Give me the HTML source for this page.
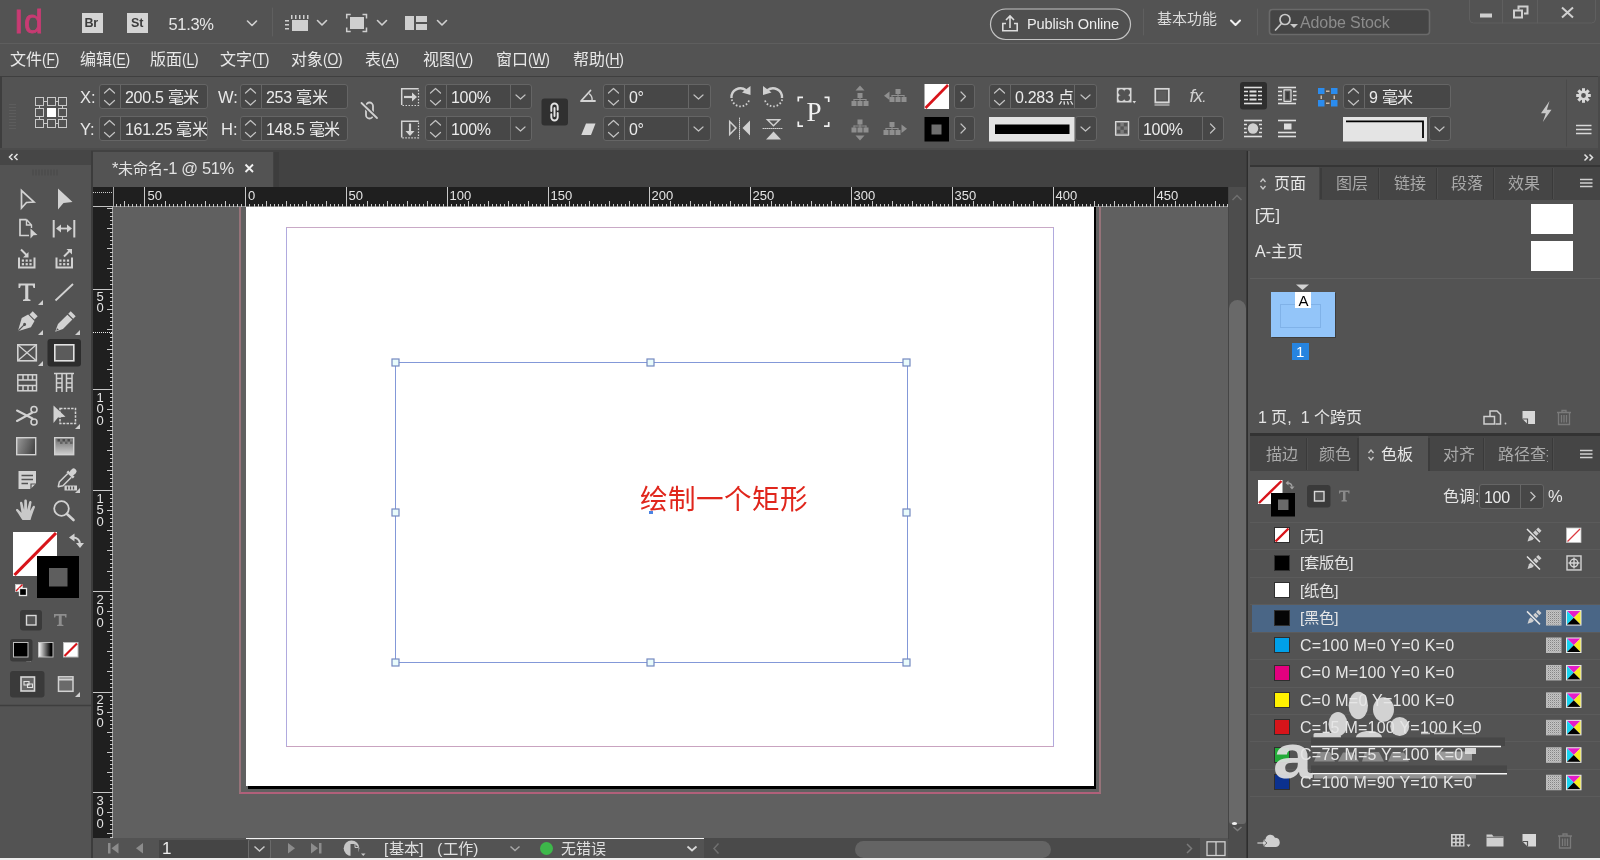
<!DOCTYPE html>
<html lang="zh-CN">
<head>
<meta charset="utf-8">
<title>InDesign</title>
<style>
*{box-sizing:border-box;margin:0;padding:0}
html,body{width:1600px;height:860px;overflow:hidden;background:#535353}
body{filter:grayscale(0);position:relative;font-family:"Liberation Sans",sans-serif;font-size:16px;color:#e6e6e6}
.a{position:absolute}
.t{position:absolute;white-space:nowrap;line-height:1}
svg{position:absolute;overflow:visible}
/* regions */
#topbar{left:0;top:0;width:1600px;height:43px;background:#535353}
#menubar{left:0;top:44px;width:1600px;height:31px;background:#535353}
#ctrl{left:0;top:76px;width:1600px;height:75px;background:#535353;border-top:1px solid #3f3f3f}
#tabrow{left:91px;top:150px;width:1157px;height:37px;background:#424242}
#tab{left:93px;top:152px;width:180px;height:35px;background:#535353}
#tools{left:0;top:150px;width:91px;height:710px;background:#535353}
#hruler{left:93px;top:187px;width:1135px;height:20px;background:#1f1f1f}
#vruler{left:93px;top:187px;width:20px;height:651px;background:#1f1f1f}
#paste{left:113px;top:207px;width:1115px;height:631px;background:#606060}
#vscroll{left:1228px;top:187px;width:19px;height:673px;background:#4d4d4d}
#status{left:93px;top:838px;width:1135px;height:20px;background:#535353;overflow:hidden}
#right{left:1248px;top:151px;width:352px;height:707px;background:#535353;overflow:hidden}
.rl{font-size:13px;color:#e4e4e4}
.rv{font-size:13px;color:#e4e4e4;line-height:11.300px;text-align:center;width:8px}
.mi{top:4.500px;font-size:16px;color:#e8e8e8;line-height:20px}
.ml{display:inline-block;font-size:16.500px;transform:scaleX(0.840);transform-origin:0 50%;letter-spacing:-0.200px}
.mi u{text-underline-offset:2px}

.f{position:absolute;overflow:hidden;height:25px;border:1px solid #656565;border-radius:3px;background:#474747}
.f i{position:absolute;top:0;width:1px;height:23px;background:#676767}
.f b{position:absolute;top:4px;font-weight:normal;font-size:16px;line-height:18px;color:#ebebeb;white-space:nowrap;letter-spacing:-0.3px}
.lb{font-size:16.5px;color:#e8e8e8}

.pt{position:absolute;top:0;height:34px;font-size:16px;line-height:34px;color:#a9a9a9;white-space:nowrap}
.sw{position:absolute;left:26px;width:16px;height:16px;border:1px solid #2e2e2e}
.sn{position:absolute;z-index:2;left:52px;font-size:16px;line-height:20px;color:#e6e6e6;white-space:nowrap}
.rs{position:absolute;left:2px;width:350px;height:1px;background:#5b5b5b}
</style>
</head>
<body>
<div id="topbar" class="a">
<div class="t" style="left:14px;top:2.500px;font-size:34px;color:#c83b73;letter-spacing:0.500px;line-height:36px;-webkit-text-stroke:0.800px #c83b73">Id</div>
<div class="a" style="left:82px;top:13px;width:21px;height:20px;background:#d4d4d4"></div>
<div class="t" style="left:84.5px;top:17px;font-size:12.5px;font-weight:bold;color:#3c3c3c;letter-spacing:-0.3px">Br</div>
<div class="a" style="left:127px;top:13px;width:21px;height:20px;background:#d4d4d4"></div>
<div class="t" style="left:131px;top:17px;font-size:12.5px;font-weight:bold;color:#3c3c3c;letter-spacing:-0.2px">St</div>
<div class="t" style="left:168.500px;top:16px;font-size:16.500px;letter-spacing:-0.350px">51.3%</div>
<svg style="left:0;top:0" width="1600" height="43" fill="none" stroke="#d0d0d0" stroke-width="1.6" stroke-linecap="round" stroke-linejoin="round">
<path d="M247.5 21l4.5 4.5l4.5 -4.5"/><path d="M317.5 20.5l4.5 4.5l4.5 -4.5"/><path d="M377.500 20.5l4.5 4.5l4.5 -4.5"/><path d="M437.5 20.5l4.5 4.5l4.500 -4.500"/>
<path d="M1231 20.5l4.500 4.500l4.500 -4.500" stroke="#f0f0f0" stroke-width="2"/>
<g stroke="none" fill="#cfcfcf">
<rect x="292" y="20" width="16" height="11"/><rect x="285" y="20" width="4" height="1.500"/><rect x="285" y="24" width="4" height="1.500"/><rect x="285" y="28" width="4" height="1.500"/><rect x="291" y="15" width="1.5" height="4"/><rect x="295" y="15" width="1.5" height="4"/><rect x="299" y="15" width="1.5" height="4"/><rect x="303" y="15" width="1.5" height="4"/><rect x="307" y="15" width="1.5" height="4"/>
<rect x="350" y="17" width="14" height="12"/>
<rect x="405" y="16" width="9" height="14"/><rect x="416" y="16" width="11" height="6"/><rect x="416" y="24" width="11" height="6"/>
<rect x="1480" y="13.5" width="12" height="4"/>
</g>
<g stroke="#cfcfcf" stroke-width="1.5" stroke-linecap="butt" stroke-linejoin="miter"><path d="M346.700 18.500v-4h4M362.500 14.500h4v4M366.500 27.500v4h-4M350.700 31.500h-4v-4"/>
<rect x="1514" y="10.5" width="8" height="7" stroke-width="2"/><path d="M1518.500 9.500v-3h9v7h-3.500" stroke-width="2"/>
<path d="M1562 7.500l11 10M1573 7.500l-11 10" stroke-width="2"/>
</g>
<g stroke="#5f5f5f" stroke-width="1"><path d="M272.500 8v28M1143.500 9v26M1257.500 9v26"/><path d="M1469.500 0v19q0 4 4 4h118q4 0 4 -4v-19M1502.500 0v23M1537.500 0v23"/></g>
<rect x="990.500" y="9" width="140" height="30.500" rx="15.250" stroke="#c4c4c4" stroke-width="1.200" fill="#4f4f4f"/>
<g stroke="#dcdcdc" stroke-width="1.600" stroke-linecap="butt" stroke-linejoin="miter"><path d="M1006 23.500h-3.200v7.300h14.400v-7.300h-3.200M1010 28v-11.500M1006 20l4 -4l4 4"/></g>
<rect x="1269.500" y="9.500" width="160" height="25" rx="3" fill="#454545" stroke="#6a6a6a"/>
<g stroke="#c8c8c8" stroke-width="1.700"><circle cx="1285" cy="19.500" r="5"/><path d="M1281.500 23.500l-6 6.500"/></g><path d="M1290 24h8l-4 4z" fill="#c8c8c8" stroke="none"/>
</svg>
<div class="t" style="left:1027px;top:16.500px;font-size:14.600px;color:#ededed;letter-spacing:-0.150px">Publish Online</div>
<div class="t" style="left:1157px;top:11px;font-size:15px;color:#dcdcdc">基本功能</div>
<div class="t" style="left:1300px;top:15px;font-size:16px;color:#8c8c8c;letter-spacing:-0.100px">Adobe Stock</div>
</div>
<div class="a" style="left:0;top:43px;width:1600px;height:1px;background:#5e5e5e"></div>
<div id="menubar" class="a"><div class="t mi" style="left:10px">文件<span class="ml">(<u>F</u>)</span></div><div class="t mi" style="left:80px">编辑<span class="ml">(<u>E</u>)</span></div><div class="t mi" style="left:150px">版面<span class="ml">(<u>L</u>)</span></div><div class="t mi" style="left:220px">文字<span class="ml">(<u>T</u>)</span></div><div class="t mi" style="left:291px">对象<span class="ml">(<u>O</u>)</span></div><div class="t mi" style="left:365px">表<span class="ml">(<u>A</u>)</span></div><div class="t mi" style="left:423px">视图<span class="ml">(<u>V</u>)</span></div><div class="t mi" style="left:496px">窗口<span class="ml">(<u>W</u>)</span></div><div class="t mi" style="left:573px">帮助<span class="ml">(<u>H</u>)</span></div></div>
<div id="ctrl" class="a"></div>
<!-- ===== control panel widgets ===== -->
<div class="a" style="left:0;top:76px;width:2px;height:73px;background:#3e3e3e"></div>
<div class="a" style="left:0;top:148px;width:1600px;height:2px;background:#4c4c4c"></div>
<div class="a" style="left:9px;top:104px;width:7px;height:25px;background:repeating-linear-gradient(180deg,#5d5d5d 0 1px,#535353 1px 3px)"></div>
<div class="a" style="left:1598px;top:76px;width:2px;height:782px;background:#4a4a4a"></div>

<div class="f" style="left:99px;top:84px;width:109px"><i style="left:20px"></i><b style="left:25px">200.5 毫米</b></div>
<div class="f" style="left:99px;top:116px;width:109px"><i style="left:20px"></i><b style="left:25px">161.25 毫米</b></div>
<div class="f" style="left:240px;top:84px;width:108px"><i style="left:20px"></i><b style="left:25px">253 毫米</b></div>
<div class="f" style="left:240px;top:116px;width:108px"><i style="left:20px"></i><b style="left:25px">148.5 毫米</b></div>
<div class="f" style="left:425px;top:84px;width:107px"><i style="left:20px"></i><i style="left:84px"></i><b style="left:25px">100%</b></div>
<div class="f" style="left:425px;top:116px;width:107px"><i style="left:20px"></i><i style="left:84px"></i><b style="left:25px">100%</b></div>
<div class="f" style="left:603px;top:84px;width:108px"><i style="left:20px"></i><i style="left:84px"></i><b style="left:25px">0°</b></div>
<div class="f" style="left:603px;top:116px;width:108px"><i style="left:20px"></i><i style="left:84px"></i><b style="left:25px">0°</b></div>
<div class="f" style="left:954px;top:84px;width:21px"></div>
<div class="f" style="left:954px;top:116px;width:21px"></div>
<div class="f" style="left:989px;top:84px;width:108px"><i style="left:20px"></i><i style="left:84px"></i><b style="left:25px">0.283 点</b></div>
<div class="f" style="left:1075px;top:116px;width:22px"></div>
<div class="f" style="left:1138px;top:116px;width:86px"><i style="left:63px"></i><b style="left:4px">100%</b></div>
<div class="f" style="left:1343px;top:84px;width:108px"><i style="left:20px"></i><b style="left:25px">9 毫米</b></div>
<div class="f" style="left:1429px;top:116px;width:22px"></div>
<div class="t lb" style="left:80px;top:89px">X:</div><div class="t lb" style="left:80px;top:121px">Y:</div>
<div class="t lb" style="left:218px;top:89px">W:</div><div class="t lb" style="left:221px;top:121px">H:</div>
<div class="t" style="left:806.500px;top:99px;font-family:'Liberation Serif',serif;font-size:27px;color:#f0f0f0">P</div>
<div class="t" style="left:1189.500px;top:86.500px;font-size:18.500px;font-style:italic;color:#cfcfcf;letter-spacing:-0.800px">fx<span style="font-size:15px;letter-spacing:0">.</span></div>
<svg id="ctrlsvg" style="left:0;top:0" width="1600" height="151" fill="none" stroke="#d2d2d2" stroke-width="1.500" stroke-linecap="round" stroke-linejoin="round"><g id="chev" stroke="#c2c2c2" stroke-width="1.200"><path d="M104.5 93l5 -4.500l5 4.500M104.5 100.5l5 4.500l5 -4.500"/><path d="M104.5 125l5 -4.500l5 4.500M104.5 132.5l5 4.500l5 -4.500"/><path d="M245.5 93l5 -4.500l5 4.500M245.5 100.5l5 4.500l5 -4.500"/><path d="M245.5 125l5 -4.500l5 4.500M245.5 132.5l5 4.500l5 -4.500"/><path d="M430.5 93l5 -4.500l5 4.500M430.5 100.5l5 4.500l5 -4.500"/><path d="M516.0 95l4.500 4l4.500 -4"/><path d="M430.5 125l5 -4.500l5 4.500M430.5 132.5l5 4.500l5 -4.500"/><path d="M516.0 127l4.500 4l4.500 -4"/><path d="M608.5 93l5 -4.500l5 4.500M608.5 100.5l5 4.500l5 -4.500"/><path d="M694.0 95l4.500 4l4.500 -4"/><path d="M608.5 125l5 -4.500l5 4.500M608.5 132.5l5 4.500l5 -4.500"/><path d="M694.0 127l4.500 4l4.500 -4"/><path d="M961 92l4.500 4.500l-4.500 4.500"/><path d="M961 124l4.500 4.500l-4.500 4.500"/><path d="M994.5 93l5 -4.500l5 4.500M994.5 100.5l5 4.500l5 -4.500"/><path d="M1081.0 95l4.500 4l4.500 -4"/><path d="M1081.0 127l4.500 4l4.500 -4"/><path d="M1210.5 124l4.500 4.500l-4.500 4.500"/><path d="M1348.5 93l5 -4.500l5 4.500M1348.5 100.5l5 4.500l5 -4.500"/><path d="M1435.0 127l4.500 4l4.500 -4"/></g>
<g stroke="#c9c9c9" stroke-width="1" shape-rendering="crispEdges" stroke-linecap="butt"><rect x="35.5" y="97.5" width="8" height="8" fill="none"/><rect x="47.5" y="97.5" width="8" height="8" fill="none"/><rect x="58.5" y="97.5" width="8" height="8" fill="none"/><rect x="35.5" y="108.5" width="8" height="8" fill="none"/><rect x="47.5" y="108.5" width="8" height="8" fill="#fff" stroke="#fff"/><rect x="58.5" y="108.5" width="8" height="8" fill="none"/><rect x="35.5" y="119.5" width="8" height="8" fill="none"/><rect x="47.5" y="119.5" width="8" height="8" fill="none"/><rect x="58.5" y="119.5" width="8" height="8" fill="none"/><path d="M44 101.500h3M56 101.500h2M44 123.500h3M56 123.500h2M39.500 106v2M39.500 117v2M62.500 106v2M62.500 117v2"/></g>
<g stroke="#d0d0d0" stroke-width="1.800"><rect x="366" y="102.500" width="7" height="16" rx="3.500"/><path d="M361.500 103l15.500 15" stroke="#535353" stroke-width="4.500"/><path d="M361.500 103l15.500 15"/></g>
<g stroke="#d4d4d4" stroke-linecap="butt" stroke-linejoin="miter"><path d="M401.700 105v-16.300h17"/><path d="M418.500 90v15.500h-17" stroke-dasharray="1.500 1.500" stroke-width="1.200"/><path d="M404 97h10" stroke-width="2.200"/><path d="M412 92.500l5 4.500l-5 4.500z" fill="#d4d4d4" stroke="none"/><path d="M401.700 137.500v-16.300h17"/><path d="M418.500 122.500v15.300h-17" stroke-dasharray="1.500 1.500" stroke-width="1.200"/><path d="M410 123.500v9" stroke-width="2.200"/><path d="M405.500 131l4.500 5l4.500 -5z" fill="#d4d4d4" stroke="none"/></g>
<rect x="541.500" y="98.500" width="26.500" height="27" rx="3" fill="#303030" stroke="none"/><g stroke="#e4e4e4" stroke-width="1.900"><path d="M551.300 111v-4.300a3.200 3.200 0 0 1 6.400 0v3"/><path d="M557.700 113v4.300a3.200 3.200 0 0 1 -6.400 0v-3"/><path d="M554.500 108v8"/></g>
<g stroke="#d4d4d4" stroke-width="1.800" stroke-linecap="round" stroke-linejoin="round"><path d="M590.500 90.500l-9.500 10.500h14"/><path d="M589.500 94a7 7 0 0 1 2.500 6.500" stroke-width="1.400"/></g><path d="M586 123.500h9.500l-4.500 11.500h-9.700z" fill="#d8d8d8" stroke="none"/>
<g stroke="#d0d0d0" stroke-width="2.400" stroke-linecap="butt"><path d="M731.500 98a9 9 0 0 1 14.500 -7.800"/><path d="M731.800 99.500a9 9 0 0 0 17.600 -0.500" stroke-dasharray="1.600 1.900" stroke-width="1.800"/><path d="M750.500 86v9l-8.500 -2.500z" fill="#d0d0d0" stroke="none"/><path d="M782 98a9 9 0 0 0 -14.500 -7.800"/><path d="M782.200 99.500a9 9 0 0 1 -17.600 -0.500" stroke-dasharray="1.600 1.900" stroke-width="1.800"/><path d="M763 86v9l8.500 -2.500z" fill="#d0d0d0" stroke="none"/></g>
<g stroke="#d0d0d0" stroke-width="1.500" stroke-linejoin="miter"><path d="M729.700 121.500v13l6.300 -6.500z"/><path d="M739.500 118v21.500" stroke-dasharray="1 1" stroke-width="1"/><path d="M750 120.500v15l-7.500 -7.500z" fill="#d0d0d0" stroke="none"/><path d="M767.500 119.700h12l-6 6z"/><path d="M763 128.500h19.500" stroke-dasharray="1 1" stroke-width="1"/><path d="M766 139.500h15l-7.500 -8z" fill="#d0d0d0" stroke="none"/></g>
<g stroke="#f0f0f0" stroke-width="1.700" stroke-linecap="butt" stroke-linejoin="miter"><path d="M798.300 101.500v-4.200h4.700M824.500 97.300h4.200v4.700M828.700 122v4.200h-4.700M803 126.200h-4.700v-4.700"/></g>
<g fill="#8f8f8f" stroke="none"><rect x="857.5" y="93" width="5" height="5"/><rect x="851.5" y="101" width="5" height="5"/><rect x="857.5" y="101" width="5" height="5"/><rect x="863.5" y="101" width="5" height="5"/><path d="M860 98v3M854 99.5h12M854 99.5v1.500M866 99.5v1.500" stroke="#8f8f8f" stroke-width="1" fill="none"/><path d="M855.500 90.500h9l-4.500 -5z"/><rect x="895.5" y="89" width="5" height="5"/><rect x="889.5" y="97" width="5" height="5"/><rect x="895.5" y="97" width="5" height="5"/><rect x="901.5" y="97" width="5" height="5"/><path d="M898 94v3M892 95.5h12M892 95.5v1.500M904 95.5v1.500" stroke="#8f8f8f" stroke-width="1" fill="none"/><path d="M889.500 91.500v8.500l-5.500 -4.200z"/><rect x="857.5" y="119.5" width="5" height="5"/><rect x="851.5" y="127.5" width="5" height="5"/><rect x="857.5" y="127.5" width="5" height="5"/><rect x="863.5" y="127.5" width="5" height="5"/><path d="M860 124.5v3M854 126.0h12M854 126.0v1.500M866 126.0v1.500" stroke="#8f8f8f" stroke-width="1" fill="none"/><path d="M855.500 135.500h9l-4.500 5z"/><rect x="889.5" y="122" width="5" height="5"/><rect x="883.5" y="130" width="5" height="5"/><rect x="889.5" y="130" width="5" height="5"/><rect x="895.5" y="130" width="5" height="5"/><path d="M892 127v3M886 128.5h12M886 128.5v1.500M898 128.5v1.500" stroke="#8f8f8f" stroke-width="1" fill="none"/><path d="M901.500 124.500v8.500l5.500 -4.200z"/></g>
<rect x="924.500" y="84" width="24.500" height="25" fill="#fff" stroke="none"/><path d="M925.500 108l22.500 -23" stroke="#d8141a" stroke-width="2.600" stroke-linecap="butt"/><rect x="924.500" y="117" width="24.500" height="24.500" fill="#000" stroke="none"/><rect x="931.500" y="124.500" width="10" height="10" fill="#6e6e6e" stroke="none"/>
<rect x="989" y="117" width="85.500" height="24.500" fill="#e3e3e3" stroke="none"/><rect x="995" y="124.500" width="74.500" height="9.500" fill="#000" stroke="none"/>
<g stroke="#d6d6d6" stroke-width="1.700" stroke-linejoin="miter"><rect x="1116.800" y="87.800" width="14.700" height="14.700" fill="#d6d6d6" stroke="none"/><g fill="#535353" stroke="none"><circle cx="1121.300" cy="92.300" r="3"/><circle cx="1127" cy="92.300" r="3"/><circle cx="1121.300" cy="98" r="3"/><circle cx="1127" cy="98" r="3"/><rect x="1121" y="92" width="6.500" height="6.500"/></g><path d="M1132.500 101h3.600l-1.800 2.400z" fill="#d6d6d6" stroke="none"/><rect x="1155.300" y="88.800" width="13.500" height="13.500"/><rect x="1157.500" y="91" width="9" height="9" fill="#5c5c5c" stroke="none"/><rect x="1154.500" y="103.300" width="15" height="2.700" fill="#9a9a9a" stroke="none"/></g>
<g stroke="none"><rect x="1115" y="121" width="14" height="14.500" fill="#7c7c7c"/><rect x="1117" y="123" width="3.400" height="3.400" fill="#555"/><rect x="1123.800" y="123" width="3.400" height="3.400" fill="#555"/><rect x="1120.400" y="126.400" width="3.400" height="3.400" fill="#555"/><rect x="1117" y="129.800" width="3.400" height="3.400" fill="#555"/><rect x="1123.800" y="129.800" width="3.400" height="3.400" fill="#555"/><rect x="1115.600" y="121.600" width="13" height="13.500" fill="none" stroke="#d8d8d8" stroke-width="1.300"/></g>
<rect x="1240" y="82" width="27" height="27.500" rx="3" fill="#2e2e2e" stroke="none"/><g stroke="#e0e0e0" stroke-width="1.600" stroke-linecap="butt"><path d="M1244 87.5h18"/><path d="M1244 103.5h18"/><path d="M1244 91.500h4M1258 91.500h4M1244 95.500h4M1258 95.500h4M1244 99.500h4M1258 99.500h4"/><path d="M1249.500 91.500h7M1249.500 95.500h7M1249.500 99.500h7" stroke-width="2.200"/><path d="M1278 87.5h18"/><path d="M1278 103.5h18"/><path d="M1278 91.500h4M1293 91.500h3.500M1278 95.500h4M1293 95.500h3.500M1278 99.500h4M1293 99.500h3.500"/><rect x="1284" y="89.800" width="7" height="11.500" fill="#535353" stroke-width="1.200"/><rect x="1286.300" y="92" width="2.500" height="7" fill="#3a3a3a" stroke="none"/><path d="M1244 120.5h18"/><path d="M1244 136.5h18"/><path d="M1244 124.500h3M1259 124.500h3M1244 128.500h2.500M1260 128.500h2M1244 132.500h3M1259 132.500h3"/><circle cx="1253" cy="128.500" r="5.200" fill="#cfcfcf" stroke="none"/><path d="M1278 120.5h18"/><path d="M1278 132.5h18"/><path d="M1278 136.5h18"/><rect x="1284" y="123.500" width="7.500" height="6" fill="#dcdcdc" stroke="none"/></g>
<g stroke="none" fill="#2b8cee"><rect x="1318" y="88" width="6.500" height="6"/><rect x="1331" y="88" width="6.500" height="6"/><rect x="1318" y="100" width="6.500" height="6.500"/><rect x="1331" y="100" width="6.500" height="6.500"/></g><g stroke="none" fill="#c9b8a8"><rect x="1326" y="90.500" width="3.500" height="1.500"/><rect x="1326" y="102.500" width="3.500" height="1.500"/><rect x="1320.500" y="95.500" width="1.500" height="3.500"/><rect x="1333.500" y="95.500" width="1.500" height="3.500"/></g>
<rect x="1343" y="117" width="84" height="24.500" fill="#e4e4e4" stroke="none"/><path d="M1346 121.300h77v16.700" stroke="#000" stroke-width="1.800" stroke-linecap="butt" stroke-linejoin="miter"/>
<path d="M1549.500 101l-8.500 12.300h4.800l-3 8.700l8.700 -12.300h-4.600z" fill="#c8c8c8" stroke="none"/>
<g transform="translate(1583.500 95.500)" stroke="none" fill="#d8d8d8"><rect x="-1.500" y="-7.300" width="3" height="3.200" transform="rotate(0)"/><rect x="-1.500" y="-7.300" width="3" height="3.200" transform="rotate(45)"/><rect x="-1.500" y="-7.300" width="3" height="3.200" transform="rotate(90)"/><rect x="-1.500" y="-7.300" width="3" height="3.200" transform="rotate(135)"/><rect x="-1.500" y="-7.300" width="3" height="3.200" transform="rotate(180)"/><rect x="-1.500" y="-7.300" width="3" height="3.200" transform="rotate(225)"/><rect x="-1.500" y="-7.300" width="3" height="3.200" transform="rotate(270)"/><rect x="-1.500" y="-7.300" width="3" height="3.200" transform="rotate(315)"/></g><circle cx="1583.500" cy="95.500" r="3.700" stroke="#d8d8d8" stroke-width="2.600"/>
<g stroke="#d8d8d8" stroke-width="1.500" stroke-linecap="butt"><path d="M1576 125.500h15.500M1576 129.500h15.500M1576 133.500h15.500"/></g>
<path d="M1566.500 80v66" stroke="#4a4a4a" stroke-width="1"/>
</svg>

<div id="tabrow" class="a"></div>
<div id="tab" class="a"><div class="t" style="left:19px;top:7px;font-size:16.500px;color:#e2e2e2;letter-spacing:-0.350px;line-height:18px">*<span style="font-size:15px;letter-spacing:0">未命名</span>-1 @ 51%</div>
<svg style="left:152px;top:12px" width="9" height="9" stroke="#f0f0f0" stroke-width="1.900" stroke-linecap="butt"><path d="M0.500 0.500l7.500 7.500M8 0.500l-7.500 7.500"/></svg></div>
<div class="a" style="left:274px;top:152px;width:5px;height:35px;background:#3d3d3d"></div>
<div id="tools" class="a"><svg style="left:0;top:0" width="91" height="710" fill="none" stroke="#d2d2d2" stroke-width="1.500"><defs><linearGradient id="gsw" x1="0" y1="0" x2="1" y2="0.300"><stop offset="0" stop-color="#9a9a9a"/><stop offset="1" stop-color="#4a4a4a"/></linearGradient><linearGradient id="gfe" x1="0" y1="0" x2="0" y2="1"><stop offset="0" stop-color="#6a6a6a"/><stop offset="1" stop-color="#cfcfcf"/></linearGradient><linearGradient id="gbw" x1="0" y1="0" x2="1" y2="0"><stop offset="0" stop-color="#fff"/><stop offset="0.850" stop-color="#000"/></linearGradient></defs><rect x="0" y="0" width="91" height="15" fill="#464646" stroke="none"/><path d="M12.500 10l-3 -3l3 -3M17.500 10l-3 -3l3 -3" stroke="#e4e4e4" stroke-width="1.500" stroke-linejoin="miter" stroke-linecap="butt"/><path d="M33 19.500v6M36 19.500v6M39 19.500v6M42 19.500v6M45 19.500v6M48 19.500v6M51 19.500v6M54 19.500v6M57 19.500v6" stroke="#484848" stroke-width="1"/><g transform="translate(0 -150)"><path d="M21.500 190.500v17.500l5 -5.500l7.500 -0.500z" stroke-width="1.700" stroke-linejoin="miter"/>
<path d="M58 188.500v21l5.500 -6.500l9 -1z" fill="#d2d2d2" stroke="none"/>
<path d="M26.500 219.700h-6.500v15.800h9" stroke-width="1.700" stroke-linejoin="miter" stroke-linecap="butt"/><path d="M26.500 219.500l5 5.500v3M26.500 219.500v5.500h5" stroke-width="1.400" stroke-linejoin="miter"/><path d="M30.500 228.500v10l3 -3.200l4 -0.300z" fill="#d2d2d2" stroke="none"/>
<path d="M53.700 220v17.500M74.300 220v17.500" stroke-width="2" stroke-linecap="butt"/><path d="M59 228.500h10" stroke-width="1.800"/><path d="M61 224.500l-5 4l5 4zM67 224.500l5 4l-5 4z" fill="#d2d2d2" stroke="none"/>
<path d="M19 257.5v10h15.500v-10" stroke-width="2" stroke-linejoin="miter" stroke-linecap="butt"/><rect x="21.8" y="259.5" width="2.200" height="2.200" fill="#d2d2d2" stroke="none"/><rect x="21.8" y="263.1" width="2.200" height="2.200" fill="#d2d2d2" stroke="none"/><rect x="25.6" y="259.5" width="2.200" height="2.200" fill="#d2d2d2" stroke="none"/><rect x="25.6" y="263.1" width="2.200" height="2.200" fill="#d2d2d2" stroke="none"/><rect x="29.4" y="259.5" width="2.200" height="2.200" fill="#d2d2d2" stroke="none"/><rect x="29.4" y="263.1" width="2.200" height="2.200" fill="#d2d2d2" stroke="none"/><path d="M21 249.500l6 6" stroke-width="2" stroke-linecap="butt"/><path d="M28.500 252v5.500h-5.500z" fill="#d2d2d2" stroke="none"/>
<path d="M56.5 257.5v10h15.500v-10" stroke-width="2" stroke-linejoin="miter" stroke-linecap="butt"/><rect x="59.3" y="259.5" width="2.200" height="2.200" fill="#d2d2d2" stroke="none"/><rect x="59.3" y="263.1" width="2.200" height="2.200" fill="#d2d2d2" stroke="none"/><rect x="63.099999999999994" y="259.5" width="2.200" height="2.200" fill="#d2d2d2" stroke="none"/><rect x="63.099999999999994" y="263.1" width="2.200" height="2.200" fill="#d2d2d2" stroke="none"/><rect x="66.89999999999999" y="259.5" width="2.200" height="2.200" fill="#d2d2d2" stroke="none"/><rect x="66.89999999999999" y="263.1" width="2.200" height="2.200" fill="#d2d2d2" stroke="none"/><path d="M64 256.500l6 -6" stroke-width="2" stroke-linecap="butt"/><path d="M66.500 249h5.500v5.500z" fill="#d2d2d2" stroke="none"/>
<path d="M18.500 283.500h16.500v4.500h-1.500l-0.800 -2.500h-4.400v13.500l2.200 0.700v1.300h-7.500v-1.300l2.200 -0.700v-13.500h-4.400l-0.800 2.500h-1.500z" fill="#d2d2d2" stroke="none"/>
<path d="M55.500 300.500l17.500 -16.500" stroke-width="1.800" stroke-linecap="butt"/>
<path d="M43 305v-5l-5 5z" fill="#cfcfcf" stroke="none"/><path d="M43 335v-5l-5 5z" fill="#cfcfcf" stroke="none"/><path d="M80 335v-5l-5 5z" fill="#cfcfcf" stroke="none"/><path d="M43 366v-5l-5 5z" fill="#cfcfcf" stroke="none"/><path d="M80 366v-5l-5 5z" fill="#e0e0e0" stroke="none"/><path d="M80 429v-5l-5 5z" fill="#cfcfcf" stroke="none"/><path d="M80 493v-5l-5 5z" fill="#cfcfcf" stroke="none"/><path d="M31 661.5v-5l-5 5z" fill="#cfcfcf" stroke="none"/><path d="M80 697v-5l-5 5z" fill="#cfcfcf" stroke="none"/>
<g transform="translate(26 323) rotate(45)" stroke="none" fill="#d2d2d2"><path d="M-3.500 -13h7v4.500h-7z"/><path d="M-4.500 -7.500h9l2 7l-6.500 12l-6.500 -12z"/><path d="M0 11v-8" stroke="#535353" stroke-width="1.200"/><circle cx="0" cy="2" r="1.500" fill="#535353"/></g>
<g transform="translate(64 323) rotate(45)" stroke="none" fill="#d2d2d2"><path d="M-3.500 -13h7v3.500h-7z"/><path d="M-3.500 -8.300h7v13.300l-3.500 7.500l-3.500 -7.500z"/><path d="M-1.200 8.500l1.200 2.500l1.200 -2.500z" fill="#535353"/></g>
<rect x="17.800" y="344.800" width="18.500" height="16" stroke-width="1.600"/><path d="M18 345l18 15.500M36 345l-18 15.500" stroke-width="1.300"/>
<rect x="47.500" y="339" width="33.500" height="27.500" rx="3" fill="#2d2d2d" stroke="none"/><rect x="54.800" y="344.800" width="19" height="16" fill="#5b5b5b" stroke-width="1.600" stroke="#e2e2e2"/>
<g stroke-width="1.500" stroke-linecap="butt"><rect x="17.800" y="374.800" width="18.700" height="16"/><path d="M18 380h18.500M18 385.500h18.500M23 375v5M28 375v5M32.500 375v5M23 385.500v5.500M28 385.500v5.500M32.500 385.500v5.500"/></g>
<g stroke-width="1.500" stroke-linecap="butt"><path d="M54 373.500h20M56.500 373.500v18.500M62 373.500v18.500M66.500 373.500v18.500M72 373.500v18.500M56.500 378.500h5.500M56.500 383h5.500M56.500 387.500h5.500M66.500 378.500h5.500M66.500 383h5.500M66.500 387.500h5.500"/></g>
<g stroke-width="2"><path d="M17 410.500l15.500 8M17 421l15.500 -8.500" stroke-linecap="round"/><circle cx="34" cy="409.500" r="3" stroke-width="1.600"/><circle cx="34" cy="422" r="3" stroke-width="1.600"/></g>
<rect x="60" y="408.500" width="15.500" height="15" stroke-width="1.500" stroke-dasharray="2.500 1.200"/><path d="M53.500 405.500v17.500l4.500 -5.500l7.500 -0.700z" fill="#d2d2d2" stroke="none"/>
<rect x="16.700" y="437.700" width="19" height="17" fill="url(#gsw)" stroke-width="1.400"/><rect x="54.700" y="437.700" width="19" height="17" fill="url(#gfe)" stroke-width="1.400"/><g fill="#4a4a4a" stroke="none"><rect x="57.500" y="439" width="2.500" height="2.500"/><rect x="62.500" y="439" width="2.500" height="2.500"/><rect x="67.500" y="439" width="2.500" height="2.500"/><rect x="60" y="441.500" width="2.500" height="2.500" opacity=".6"/><rect x="65" y="441.500" width="2.500" height="2.500" opacity=".6"/><rect x="70" y="441.500" width="2.500" height="2.500" opacity=".6"/></g>
<path d="M18.500 471h17.500v12.500l-5.500 5.500h-12z" fill="#d2d2d2" stroke="none"/><path d="M21.500 475.500h11.500M21.500 479.500h11.500M21.500 483.500h6.500" stroke="#535353" stroke-width="1.500" stroke-linecap="butt"/><path d="M31 489v-5h5" stroke="#535353" stroke-width="1.200"/>
<g transform="translate(65 480) rotate(45)"><rect x="-2.800" y="-15" width="5.600" height="7" rx="2.500" fill="#d2d2d2" stroke="none"/><rect x="-4.500" y="-9" width="9" height="2.500" fill="#d2d2d2" stroke="none"/><path d="M-2.600 -6.500v12l2.600 4l2.600 -4v-12" stroke-width="1.500" stroke-linejoin="round"/></g><rect x="64.500" y="485.500" width="12.500" height="5" fill="#d2d2d2" stroke="none"/><path d="M67.500 486.500v3M70.500 486.500v3M73.500 486.500v3" stroke="#535353" stroke-width="1.300"/>
<path d="M22.500 520c-1.500 -2 -4 -6.500 -6.300 -9.300c-0.800 -1.200 0.700 -2.500 2 -1.300l3.300 3.300l-1.500 -9.500c-0.300 -1.700 2 -2.200 2.400 -0.500l1.700 7l0.200 -9c0 -1.700 2.500 -1.700 2.600 0l0.300 9l1.900 -7.800c0.400 -1.600 2.700 -1.100 2.400 0.600l-1.500 8.500l2.700 -4.500c0.900 -1.400 2.800 -0.300 2.100 1.200c-1.500 3.500 -3 8 -4.300 12.300z" fill="#c9c9c9" stroke="none"/>
<circle cx="61.500" cy="508.500" r="7.300" stroke-width="1.800"/><path d="M67 514l6.500 6" stroke-width="2.600" stroke-linecap="round"/>
<rect x="13" y="532" width="44" height="44" fill="#fff" stroke="none"/><path d="M14.500 575l41.500 -42" stroke="#d8141a" stroke-width="3.200" stroke-linecap="butt"/><rect x="37" y="556" width="42" height="42" fill="#000" stroke="none"/><rect x="49" y="568" width="18.500" height="18.500" fill="#5e5e5e" stroke="none"/>
<path d="M73.500 537.500q6 0.500 6.500 6.500" stroke-width="2"/><path d="M74.500 533.500v8l-5.500 -4zM76 543h8l-4 5z" fill="#d2d2d2" stroke="none"/>
<rect x="15.500" y="584.500" width="7" height="7" fill="#fff" stroke="#ccc" stroke-width="0.800"/><path d="M16 591l6.500 -6.500" stroke="#d8141a" stroke-width="1.500"/><rect x="19.500" y="588.500" width="7" height="7" fill="#000" stroke="#e8e8e8" stroke-width="1.300"/>
<rect x="20" y="610" width="22" height="20.500" rx="3" fill="#3a3a3a" stroke="none"/><rect x="26.500" y="615.500" width="9.500" height="9.500" fill="#555" stroke="#d8d8d8" stroke-width="1.400"/>
<path d="M54 614h12.500v3.500h-1.200l-0.600 -1.800h-3v8.800l1.700 0.500v1h-6.300v-1l1.700 -0.500v-8.800h-3l-0.600 1.800h-1.200z" fill="#8e8e8e" stroke="none"/>
<rect x="10" y="639" width="22.500" height="22.500" rx="3" fill="#3a3a3a" stroke="none"/><rect x="13.500" y="642.500" width="14.500" height="14.500" fill="#000" stroke="#bdbdbd" stroke-width="1"/><rect x="38.500" y="642.500" width="14.500" height="14.500" fill="url(#gbw)" stroke="#bdbdbd" stroke-width="1"/><rect x="63.500" y="642.500" width="14.500" height="14.500" fill="#fff" stroke="#bdbdbd" stroke-width="1"/><path d="M64.500 656l12.500 -12.500" stroke="#d8141a" stroke-width="2.200"/>
<rect x="10" y="671" width="34.500" height="26.500" rx="3" fill="#3a3a3a" stroke="none"/><rect x="21" y="677" width="13.500" height="14" fill="#666" stroke="#d8d8d8" stroke-width="1.600"/><path d="M24 681.500h5v3.500h-5zM27.500 684h5v3.500h-5z" stroke="#e0e0e0" stroke-width="1.100"/>
<rect x="58.500" y="676.800" width="14.500" height="14.500" fill="#6a6a6a" stroke="#d2d2d2" stroke-width="1.500"/><path d="M58.500 679.500h14.500" stroke="#d2d2d2" stroke-width="2"/>
<path d="M0 705.500h91" stroke="#3e3e3e" stroke-width="1.500"/></g></svg></div>
<div class="a" style="left:91px;top:151px;width:2px;height:709px;background:#3c3c3c"></div>
<div id="paste" class="a"></div>

<div class="a" style="left:113px;top:207px;width:1115px;height:631px;overflow:hidden"><div class="a" style="left:-113px;top:-207px;width:1600px;height:860px">
<!-- ===== canvas ===== -->
<div id="page" class="a" style="left:246px;top:188px;width:848px;height:598px;background:#fff;box-shadow:2px 3px 0 0 #000"></div>
<div class="a" style="left:239px;top:180px;width:862px;height:614px;border:2px solid #967379;border-bottom-color:#b1607a"></div>
<div class="a" style="left:286px;top:227px;width:768px;height:520px;border:1px solid #b0aade;border-top-color:#c9a9c6;border-bottom-color:#c9a3c0"></div>
<div class="a" style="left:395px;top:362px;width:513px;height:301px;border:1px solid #8398d8"></div>
<div class="t" style="left:640px;top:484px;font-size:27.6px;color:#e0261c;letter-spacing:0;line-height:32px">绘制一个矩形</div>
<div class="a" style="left:649px;top:511px;width:4px;height:3px;background:#4b84e4"></div>
<svg style="left:0;top:0" width="1600" height="860"><g fill="#e9fbfb" stroke="#7489c0" stroke-width="1.200">
<rect x="392" y="359" width="7" height="7"/><rect x="647" y="359" width="7" height="7"/><rect x="903" y="359" width="7" height="7"/>
<rect x="392" y="509" width="7" height="7"/><rect x="903" y="509" width="7" height="7"/>
<rect x="392" y="659" width="7" height="7"/><rect x="647" y="659" width="7" height="7"/><rect x="903" y="659" width="7" height="7"/>
</g></svg>
</div></div>
<div id="hruler" class="a"></div>
<div id="vruler" class="a"></div>

<!-- ===== rulers ===== -->
<svg style="left:93px;top:186px" width="1135" height="21"><g stroke="#c8c8c8" stroke-width="1" fill="none" shape-rendering="crispEdges">
<path d="M20 20.500H1135" stroke="#858585"/><path d="M0 20.500H20" stroke="#c0c0c0"/><path d="M20.500 1V21" stroke="#a8a8a8"/><path d="M0 6.500H19" stroke="#cfcfcf" stroke-dasharray="1 1"/>
<path d="M51.5 21v-20M152.5 21v-20M253.5 21v-20M354.5 21v-20M455.5 21v-20M556.5 21v-20M657.5 21v-20M758.5 21v-20M859.5 21v-20M960.5 21v-20M1061.5 21v-20"/><path d="M31.5 21v-6M72 21v-6M92 21v-6M112.5 21v-6M132.5 21v-6M173 21v-6M193 21v-6M213.5 21v-6M233.5 21v-6M274 21v-6M294 21v-6M314.5 21v-6M334.5 21v-6M375 21v-6M395 21v-6M415.5 21v-6M435.5 21v-6M476 21v-6M496 21v-6M516.5 21v-6M536.5 21v-6M577 21v-6M597 21v-6M617.5 21v-6M637.5 21v-6M678 21v-6M698 21v-6M718.5 21v-6M738.5 21v-6M779 21v-6M799 21v-6M819.5 21v-6M839.5 21v-6M880 21v-6M900 21v-6M920.5 21v-6M940.5 21v-6M981 21v-6M1001 21v-6M1021.5 21v-6M1041.5 21v-6M1082 21v-6M1102 21v-6M1122.5 21v-6"/><path d="M23.5 21v-3M27.5 21v-3M35.5 21v-3M39.5 21v-3M43.5 21v-3M47.5 21v-3M55.5 21v-3M60 21v-3M64 21v-3M68 21v-3M76 21v-3M80 21v-3M84 21v-3M88 21v-3M96 21v-3M100 21v-3M104 21v-3M108.5 21v-3M116.5 21v-3M120.5 21v-3M124.5 21v-3M128.5 21v-3M136.5 21v-3M140.5 21v-3M144.5 21v-3M148.5 21v-3M156.5 21v-3M161 21v-3M165 21v-3M169 21v-3M177 21v-3M181 21v-3M185 21v-3M189 21v-3M197 21v-3M201 21v-3M205 21v-3M209.5 21v-3M217.5 21v-3M221.5 21v-3M225.5 21v-3M229.5 21v-3M237.5 21v-3M241.5 21v-3M245.5 21v-3M249.5 21v-3M257.5 21v-3M262 21v-3M266 21v-3M270 21v-3M278 21v-3M282 21v-3M286 21v-3M290 21v-3M298 21v-3M302 21v-3M306 21v-3M310.5 21v-3M318.5 21v-3M322.5 21v-3M326.5 21v-3M330.5 21v-3M338.5 21v-3M342.5 21v-3M346.5 21v-3M350.5 21v-3M358.5 21v-3M363 21v-3M367 21v-3M371 21v-3M379 21v-3M383 21v-3M387 21v-3M391 21v-3M399 21v-3M403 21v-3M407 21v-3M411.5 21v-3M419.5 21v-3M423.5 21v-3M427.5 21v-3M431.5 21v-3M439.5 21v-3M443.5 21v-3M447.5 21v-3M451.5 21v-3M459.5 21v-3M464 21v-3M468 21v-3M472 21v-3M480 21v-3M484 21v-3M488 21v-3M492 21v-3M500 21v-3M504 21v-3M508 21v-3M512.5 21v-3M520.5 21v-3M524.5 21v-3M528.5 21v-3M532.5 21v-3M540.5 21v-3M544.5 21v-3M548.5 21v-3M552.5 21v-3M560.5 21v-3M565 21v-3M569 21v-3M573 21v-3M581 21v-3M585 21v-3M589 21v-3M593 21v-3M601 21v-3M605 21v-3M609 21v-3M613.5 21v-3M621.5 21v-3M625.5 21v-3M629.5 21v-3M633.5 21v-3M641.5 21v-3M645.5 21v-3M649.5 21v-3M653.5 21v-3M661.5 21v-3M666 21v-3M670 21v-3M674 21v-3M682 21v-3M686 21v-3M690 21v-3M694 21v-3M702 21v-3M706 21v-3M710 21v-3M714.5 21v-3M722.5 21v-3M726.5 21v-3M730.5 21v-3M734.5 21v-3M742.5 21v-3M746.5 21v-3M750.5 21v-3M754.5 21v-3M762.5 21v-3M767 21v-3M771 21v-3M775 21v-3M783 21v-3M787 21v-3M791 21v-3M795 21v-3M803 21v-3M807 21v-3M811 21v-3M815.5 21v-3M823.5 21v-3M827.5 21v-3M831.5 21v-3M835.5 21v-3M843.5 21v-3M847.5 21v-3M851.5 21v-3M855.5 21v-3M863.5 21v-3M868 21v-3M872 21v-3M876 21v-3M884 21v-3M888 21v-3M892 21v-3M896 21v-3M904 21v-3M908 21v-3M912 21v-3M916.5 21v-3M924.5 21v-3M928.5 21v-3M932.5 21v-3M936.5 21v-3M944.5 21v-3M948.5 21v-3M952.5 21v-3M956.5 21v-3M964.5 21v-3M969 21v-3M973 21v-3M977 21v-3M985 21v-3M989 21v-3M993 21v-3M997 21v-3M1005 21v-3M1009 21v-3M1013 21v-3M1017.5 21v-3M1025.5 21v-3M1029.5 21v-3M1033.5 21v-3M1037.5 21v-3M1045.5 21v-3M1049.5 21v-3M1053.5 21v-3M1057.5 21v-3M1065.5 21v-3M1070 21v-3M1074 21v-3M1078 21v-3M1086 21v-3M1090 21v-3M1094 21v-3M1098 21v-3M1106 21v-3M1110 21v-3M1114 21v-3M1118.5 21v-3M1126.5 21v-3M1130.5 21v-3M1134.5 21v-3"/></g></svg>
<svg style="left:93px;top:186px" width="20" height="652"><g stroke="#c8c8c8" stroke-width="1" fill="none" shape-rendering="crispEdges">
<path d="M19.500 21V652" stroke="#a0a0a0"/>
<path d="M20 103h-20M20 203.5h-20M20 304h-20M20 405h-20M20 506h-20M20 606.5h-20"/><path d="M20 22h-6M20 42.5h-6M20 62.5h-6M20 82.5h-6M20 123h-6M20 143h-6M20 163h-6M20 183.5h-6M20 223.5h-6M20 244h-6M20 264h-6M20 284h-6M20 324.5h-6M20 344.5h-6M20 364.5h-6M20 385h-6M20 425h-6M20 445.5h-6M20 465.5h-6M20 485.5h-6M20 526h-6M20 546h-6M20 566h-6M20 586.5h-6M20 626.5h-6M20 647h-6"/><path d="M20 26h-3M20 30h-3M20 34h-3M20 38.5h-3M20 46.5h-3M20 50.5h-3M20 54.5h-3M20 58.5h-3M20 66.5h-3M20 70.5h-3M20 74.5h-3M20 78.5h-3M20 86.5h-3M20 90.5h-3M20 94.5h-3M20 98.5h-3M20 107h-3M20 111h-3M20 115h-3M20 119h-3M20 127h-3M20 131h-3M20 135h-3M20 139h-3M20 147h-3M20 151h-3M20 155h-3M20 159h-3M20 167h-3M20 171.5h-3M20 175.5h-3M20 179.5h-3M20 187.5h-3M20 191.5h-3M20 195.5h-3M20 199.5h-3M20 207.5h-3M20 211.5h-3M20 215.5h-3M20 219.5h-3M20 227.5h-3M20 231.5h-3M20 235.5h-3M20 240h-3M20 248h-3M20 252h-3M20 256h-3M20 260h-3M20 268h-3M20 272h-3M20 276h-3M20 280h-3M20 288h-3M20 292h-3M20 296h-3M20 300h-3M20 308.5h-3M20 312.5h-3M20 316.5h-3M20 320.5h-3M20 328.5h-3M20 332.5h-3M20 336.5h-3M20 340.5h-3M20 348.5h-3M20 352.5h-3M20 356.5h-3M20 360.5h-3M20 368.5h-3M20 373h-3M20 377h-3M20 381h-3M20 389h-3M20 393h-3M20 397h-3M20 401h-3M20 409h-3M20 413h-3M20 417h-3M20 421h-3M20 429h-3M20 433h-3M20 437h-3M20 441.5h-3M20 449.5h-3M20 453.5h-3M20 457.5h-3M20 461.5h-3M20 469.5h-3M20 473.5h-3M20 477.5h-3M20 481.5h-3M20 489.5h-3M20 493.5h-3M20 497.5h-3M20 501.5h-3M20 510h-3M20 514h-3M20 518h-3M20 522h-3M20 530h-3M20 534h-3M20 538h-3M20 542h-3M20 550h-3M20 554h-3M20 558h-3M20 562h-3M20 570h-3M20 574.5h-3M20 578.5h-3M20 582.5h-3M20 590.5h-3M20 594.5h-3M20 598.5h-3M20 602.5h-3M20 610.5h-3M20 614.5h-3M20 618.5h-3M20 622.5h-3M20 630.5h-3M20 634.5h-3M20 638.5h-3M20 643h-3M20 651h-3"/>
<path d="M0 146.5H20" stroke="#eee" stroke-dasharray="1 1"/></g></svg>
<div class="t rl" style="left:147.5px;top:189px">50</div><div class="t rl" style="left:248px;top:189px">0</div><div class="t rl" style="left:348.5px;top:189px">50</div><div class="t rl" style="left:449.5px;top:189px">100</div><div class="t rl" style="left:550.5px;top:189px">150</div><div class="t rl" style="left:651.5px;top:189px">200</div><div class="t rl" style="left:752.5px;top:189px">250</div><div class="t rl" style="left:853.5px;top:189px">300</div><div class="t rl" style="left:954.5px;top:189px">350</div><div class="t rl" style="left:1055.5px;top:189px">400</div><div class="t rl" style="left:1156.5px;top:189px">450</div><div class="t rv" style="left:96px;top:291px">5<br>0</div><div class="t rv" style="left:96px;top:392px">1<br>0<br>0</div><div class="t rv" style="left:96px;top:493px">1<br>5<br>0</div><div class="t rv" style="left:96px;top:594px">2<br>0<br>0</div><div class="t rv" style="left:96px;top:694px">2<br>5<br>0</div><div class="t rv" style="left:96px;top:795px">3<br>0<br>0</div>
<div id="vscroll" class="a"><div class="a" style="left:1px;top:113px;width:17px;height:524px;background:#696969;border-radius:8.500px 8.500px 3px 3px"></div>
<div class="a" style="left:0;top:0;width:1px;height:652px;background:#454545"></div>
<svg style="left:0;top:0" width="20" height="652" fill="none" stroke="#6f6f6f" stroke-width="1.500"><path d="M4.500 13l4.500 -4.500l4.500 4.500"/><path d="M5.500 640l4 3.500l4 -3.500" stroke="#7c7c7c"/><ellipse cx="6.500" cy="636.500" rx="2.600" ry="1.600" fill="#f2f2f2" stroke="none"/></svg></div>
<div class="a" style="left:1246px;top:151px;width:4px;height:709px;background:#3a3a3a"></div><div class="a" style="left:1247px;top:151px;width:3px;height:709px;background:#2e2e2e"></div>
<div id="status" class="a">
<div class="a" style="left:66px;top:2px;width:89px;height:18px;background:#454545"></div>
<div class="a" style="left:155px;top:1px;width:23px;height:20px;border:1px solid #6a6a6a;border-radius:2px;background:#4a4a4a"></div>
<div class="t" style="left:69px;top:2px;font-size:17px;color:#ededed">1</div>
<div class="a" style="left:153px;top:0;width:458px;height:1px;background:#f4f4f4"></div>
<div class="a" style="left:611px;top:0;width:496px;height:20px;background:#4a4a4a"></div>
<div class="a" style="left:762px;top:3px;width:196px;height:17px;background:#646464;border-radius:8.500px"></div>
<div class="t" style="left:291px;top:1.500px;font-size:15.300px;color:#e0e0e0;line-height:18px;letter-spacing:0.300px">[基本]&nbsp;&nbsp;&nbsp;(工作)</div>
<div class="a" style="left:447px;top:3.500px;width:13px;height:13px;border-radius:50%;background:#3db84a"></div>
<div class="t" style="left:467.500px;top:1.500px;font-size:15px;color:#e0e0e0;line-height:18px">无错误</div>
<svg style="left:0;top:0" width="1155" height="22" fill="none" stroke="#c8c8c8" stroke-width="1.500">
<g fill="#8c8c8c" stroke="none"><rect x="15" y="5" width="2.500" height="10.500"/><path d="M25.500 5v10.500l-7 -5.250z"/><path d="M50 5v10.500l-7 -5.250z"/><path d="M195 5v10.500l7 -5.250z"/><path d="M218 5v10.500l7 -5.250z"/><rect x="226" y="5" width="2.500" height="10.500"/></g>
<path d="M161.500 8.500l5 4.500l5 -4.500"/>
<path d="M417.500 8.500l4.500 4l4.500 -4" stroke="#a8a8a8"/><path d="M594.500 8.500l4.500 4l4.500 -4" stroke="#d8d8d8" stroke-width="1.700"/>
<path d="M625.500 5.500l-4.500 5l4.500 5" stroke="#707070"/><path d="M1094 6l4.500 4.500l-4.500 4.500" stroke="#7a7a7a"/>
<rect x="1114" y="3.800" width="18" height="13.700" stroke="#d0d0d0" stroke-width="1.300"/><path d="M1123 4v13.500" stroke="#d0d0d0" stroke-width="1.300"/>
<g stroke="none"><circle cx="258.500" cy="10.300" r="7.800" fill="#c6c6c6"/><path d="M257.500 6h4.500l3.500 3.500v10h-8z" fill="#535353"/><path d="M262 6v3.500h3.500" stroke="#c6c6c6" stroke-width="1" fill="none"/><path d="M268 15.500h4.500l-2.250 2.500z" fill="#c6c6c6"/></g>
</svg></div>
<div class="a" style="left:0;top:858px;width:1600px;height:2px;background:#ededed"></div>
<div class="a" style="left:1248px;top:150px;width:352px;height:1px;background:#464646"></div>
<div id="right" class="a">
<div class="a" style="left:2px;top:0;width:350px;height:14px;background:#464646"></div>
<div class="a" style="left:2px;top:14px;width:350px;height:2px;background:#353535"></div>
<div class="a" style="left:2px;top:16px;width:350px;height:33px;background:#454545"></div>
<div class="a" style="left:2px;top:16px;width:69px;height:34px;background:#535353"></div>
<div class="a" style="left:130px;top:17px;width:1px;height:31px;background:#3a3a3a"></div><div class="a" style="left:131px;top:17px;width:1px;height:31px;background:#4d4d4d"></div>
<div class="a" style="left:188px;top:17px;width:1px;height:31px;background:#3a3a3a"></div><div class="a" style="left:189px;top:17px;width:1px;height:31px;background:#4d4d4d"></div>
<div class="a" style="left:245px;top:17px;width:1px;height:31px;background:#3a3a3a"></div><div class="a" style="left:246px;top:17px;width:1px;height:31px;background:#4d4d4d"></div>
<div class="a" style="left:304px;top:17px;width:1px;height:31px;background:#3a3a3a"></div><div class="a" style="left:305px;top:17px;width:1px;height:31px;background:#4d4d4d"></div>
<div class="a" style="left:72px;top:17px;width:2px;height:31px;background:#3c3c3c"></div>
<div class="pt" style="left:26px;top:16px;color:#e8e8e8">页面</div>
<div class="pt" style="left:88px;top:16px;color:#a9a9a9">图层</div>
<div class="pt" style="left:146px;top:16px;color:#a9a9a9">链接</div>
<div class="pt" style="left:203px;top:16px;color:#a9a9a9">段落</div>
<div class="pt" style="left:260px;top:16px;color:#a9a9a9">效果</div>
<div class="t" style="left:7px;top:55px;font-size:16px;color:#e6e6e6;line-height:20px">[无]</div>
<div class="t" style="left:7px;top:91px;font-size:16px;color:#e6e6e6;line-height:20px">A-主页</div>
<div class="a" style="left:283px;top:53px;width:42px;height:30px;background:#fff"></div>
<div class="a" style="left:283px;top:90px;width:42px;height:30px;background:#fff"></div>
<div class="a" style="left:2px;top:127px;width:350px;height:1px;background:#5e5e5e"></div>
<div class="a" style="left:23px;top:141px;width:64px;height:45px;background:#93c5f9;box-shadow:1px 1px 0 #3d3d3d"></div>
<div class="a" style="left:32px;top:153px;width:41px;height:24px;border:1px solid #80b2e8"></div>
<div class="a" style="left:47px;top:141px;width:16px;height:16px;background:#fff"></div>
<div class="t" style="left:50.5px;top:142px;font-size:15px;color:#000">A</div>
<div class="a" style="left:44px;top:192px;width:17px;height:17px;background:#2684e0"></div>
<div class="t" style="left:48px;top:193px;font-size:15px;color:#fff">1</div>
<div class="t" style="left:10px;top:257px;font-size:16px;color:#e4e4e4;line-height:20px">1 页,&nbsp; 1 个跨页</div>
<div class="a" style="left:2px;top:282px;width:350px;height:3px;background:#333"></div>
<div class="a" style="left:2px;top:285px;width:350px;height:35px;background:#454545"></div>
<div class="a" style="left:111px;top:285px;width:69px;height:36px;background:#535353"></div>
<div class="a" style="left:58px;top:287px;width:1px;height:32px;background:#3a3a3a"></div><div class="a" style="left:59px;top:287px;width:1px;height:32px;background:#4d4d4d"></div>
<div class="a" style="left:235px;top:287px;width:1px;height:32px;background:#3a3a3a"></div><div class="a" style="left:236px;top:287px;width:1px;height:32px;background:#4d4d4d"></div>
<div class="a" style="left:304px;top:287px;width:1px;height:32px;background:#3a3a3a"></div><div class="a" style="left:305px;top:287px;width:1px;height:32px;background:#4d4d4d"></div>
<div class="a" style="left:109px;top:287px;width:2px;height:33px;background:#3c3c3c"></div>
<div class="a" style="left:180px;top:287px;width:2px;height:33px;background:#3c3c3c"></div>
<div class="pt" style="left:18px;top:287px;color:#a9a9a9">描边</div>
<div class="pt" style="left:71px;top:287px;color:#a9a9a9">颜色</div>
<div class="pt" style="left:133px;top:287px;color:#e8e8e8">色板</div>
<div class="pt" style="left:195px;top:287px;color:#a9a9a9">对齐</div>
<div class="pt" style="left:250px;top:287px;width:50px;overflow:hidden">路径查找器</div>
<div class="t" style="left:195px;top:335px;font-size:16px;color:#e6e6e6;line-height:22px">色调:</div>
<div class="f" style="left:231px;top:333px;width:65px"><i style="left:40px"></i><b style="left:4px">100</b></div>
<div class="t" style="left:300px;top:337px;font-size:16.500px;color:#e6e6e6">%</div>
<div class="a" style="left:4px;top:453.65px;width:348px;height:27px;background:#4a6686"></div>
<div class="rs" style="top:370.8px"></div>
<div class="sw" style="top:376.3px;background:#fff"><svg style="left:0;top:0" width="14" height="14"><path d="M0.500 13.500l13 -13" stroke="#d8141a" stroke-width="2.400"/></svg></div>
<div class="sn" style="top:374.8px;font-size:15.300px">[无]</div>
<div class="rs" style="top:398.2px"></div>
<div class="sw" style="top:403.8px;background:#000"></div>
<div class="sn" style="top:402.2px;font-size:15.300px">[套版色]</div>
<div class="rs" style="top:425.7px"></div>
<div class="sw" style="top:431.2px;background:#fff"></div>
<div class="sn" style="top:429.7px;font-size:15.300px">[纸色]</div>
<div class="rs" style="top:453.1px"></div>
<div class="sw" style="top:458.6px;background:#050505"></div>
<div class="sn" style="top:457.1px;font-size:15.300px">[黑色]</div>
<div class="rs" style="top:480.6px"></div>
<div class="sw" style="top:486.1px;background:#00a0e9"></div>
<div class="sn" style="top:484.6px;letter-spacing:0.250px">C=100 M=0 Y=0 K=0</div>
<div class="rs" style="top:508.0px"></div>
<div class="sw" style="top:513.5px;background:#e4007f"></div>
<div class="sn" style="top:512.0px;letter-spacing:0.250px">C=0 M=100 Y=0 K=0</div>
<div class="rs" style="top:535.5px"></div>
<div class="sw" style="top:541.0px;background:#fff100"></div>
<div class="sn" style="top:539.5px;letter-spacing:0.250px">C=0 M=0 Y=100 K=0</div>
<div class="rs" style="top:562.9px"></div>
<div class="sw" style="top:568.4px;background:#d7141a"></div>
<div class="sn" style="top:566.9px;letter-spacing:0.250px">C=15 M=100 Y=100 K=0</div>
<div class="rs" style="top:590.4px"></div>
<div class="sw" style="top:595.9px;background:#22ac38"></div>
<div class="sn" style="top:594.4px;letter-spacing:0.250px">C=75 M=5 Y=100 K=0</div>
<div class="rs" style="top:617.8px"></div>
<div class="sw" style="top:623.3px;background:#0b318f"></div>
<div class="sn" style="top:621.8px;letter-spacing:0.250px">C=100 M=90 Y=10 K=0</div>
<div class="rs" style="top:645.3px"></div>
<svg style="left:-1248px;top:-151px" width="1600" height="860" fill="none" stroke="#d6d6d6" stroke-width="1.500"><defs><pattern id="dots" width="2" height="2" patternUnits="userSpaceOnUse" stroke="none"><rect width="2" height="2" fill="#c4c4c4"/><rect width="1" height="1" fill="#868686"/><rect x="1" y="1" width="1" height="1" fill="#b0b0b0"/></pattern></defs>
<path d="M1584.500 154.500l3 3l-3 3M1589.500 154.500l3 3l-3 3" stroke="#e0e0e0" stroke-width="1.500" stroke-linecap="butt" stroke-linejoin="miter"/>
<path d="M1260.500 182l2.500 -3l2.500 3M1260.500 186l2.500 3l2.500 -3" stroke="#c8c8c8" stroke-width="1.300"/><path d="M1368.500 453l2.500 -3l2.500 3M1368.500 457l2.500 3l2.500 -3" stroke="#c8c8c8" stroke-width="1.300"/>
<path d="M1580 179.5h12.500M1580 183.0h12.500M1580 186.5h12.500" stroke="#d0d0d0" stroke-width="1.500" stroke-linecap="butt"/><path d="M1580 450.5h12.500M1580 454.0h12.500M1580 457.5h12.500" stroke="#d0d0d0" stroke-width="1.500" stroke-linecap="butt"/>
<path d="M1296 284.500h13l-6.500 5.500z" fill="#d2d2d2" stroke="none"/>
<g stroke="#cfcfcf" stroke-width="1.500" stroke-linejoin="miter" stroke-linecap="butt"><path d="M1490 416v-5h7l3.500 3.500v9.500h-5"/><rect x="1484" y="416.500" width="10.500" height="7.500"/><circle cx="1505.500" cy="423.500" r="0.900" fill="#cfcfcf" stroke="none"/></g>
<path d="M1522.500 411h12.500v13h-7.500l-5 -5z" fill="#d8d8d8" stroke="none"/><path d="M1522.500 419h5v5" stroke="#535353" stroke-width="1.200"/>
<g stroke="#7a7a7a" stroke-width="1.300" stroke-linecap="butt"><path d="M1557 412.5h14M1562 412.5v-2h4v2M1558.5 413v11.500h11v-11.500M1561.5 415v7.500M1564 415v7.500M1566.5 415v7.500"/></g><g stroke="#7a7a7a" stroke-width="1.300" stroke-linecap="butt"><path d="M1558 836.0h14M1563 836.0v-2h4v2M1559.5 836.5v11.500h11v-11.500M1562.5 838.5v7.500M1565 838.5v7.500M1567.5 838.5v7.500"/></g>
<rect x="1258" y="480" width="24.500" height="24" fill="#fff" stroke="none"/><path d="M1259 503l22.500 -22" stroke="#d8141a" stroke-width="2.400"/><rect x="1271" y="493" width="24" height="23.500" fill="#000" stroke="none"/><rect x="1278" y="499.500" width="10.500" height="10.500" fill="#6a6a6a" stroke="none"/>
<path d="M1287.500 483q4 0 4.500 3.500" stroke="#a0a0a0" stroke-width="1.300"/><path d="M1288.500 480.500v5l-3 -2.500zM1289.500 486.500h5l-2.500 3z" fill="#a0a0a0" stroke="none"/>
<rect x="1307" y="485" width="23.500" height="22.500" rx="3" fill="#3a3a3a" stroke="none"/><rect x="1314.500" y="491.500" width="9.500" height="9.500" fill="#555" stroke="#d8d8d8" stroke-width="1.400"/>
<path d="M1339 490.500h10.500v3h-1l-0.500 -1.500h-2.500v8l1.500 0.500v1h-5.500v-1l1.500 -0.500v-8h-2.500l-0.500 1.500h-1z" fill="#8a8a8a" stroke="none"/>
<path d="M1530.500 492l4.500 4.500l-4.500 4.500" stroke="#c4c4c4" stroke-width="1.300"/>
<g transform="translate(1533.5 535.5)"><g transform="rotate(45)" fill="#cfcfcf" stroke="none"><rect x="-2.300" y="-9" width="4.600" height="3"/><path d="M-2.300 -5h4.600v9l-2.300 4.500l-2.300 -4.500z"/></g><path d="M-6.500 -6.500l13 13" stroke="#535353" stroke-width="3.600"/><path d="M-6.500 -6.500l13 13" stroke="#e4e4e4" stroke-width="1.500"/></g><g transform="translate(1533.5 562.95)"><g transform="rotate(45)" fill="#cfcfcf" stroke="none"><rect x="-2.300" y="-9" width="4.600" height="3"/><path d="M-2.300 -5h4.600v9l-2.300 4.500l-2.300 -4.500z"/></g><path d="M-6.500 -6.500l13 13" stroke="#535353" stroke-width="3.600"/><path d="M-6.500 -6.500l13 13" stroke="#e4e4e4" stroke-width="1.500"/></g><g transform="translate(1533.5 617.85)"><g transform="rotate(45)" fill="#cfcfcf" stroke="none"><rect x="-2.300" y="-9" width="4.600" height="3"/><path d="M-2.300 -5h4.600v9l-2.300 4.500l-2.300 -4.500z"/></g><path d="M-6.500 -6.500l13 13" stroke="#4a6686" stroke-width="3.600"/><path d="M-6.500 -6.500l13 13" stroke="#e4e4e4" stroke-width="1.500"/></g>
<rect x="1566.500" y="528.0" width="14.500" height="14.500" fill="#fff" stroke="#c0c0c0" stroke-width="0.800"/><path d="M1567.500 541.5l12.500 -12.500" stroke="#dc3a40" stroke-width="1.300"/>
<g stroke="#d4d4d4" stroke-width="1.400" stroke-linecap="butt"><rect x="1567" y="555.95" width="14" height="14"/><circle cx="1574" cy="562.95" r="3.800"/><path d="M1574 557.45v11M1568.500 562.95h11"/></g>
<g stroke="none"><rect x="1546.500" y="610.5500000000001" width="14.500" height="14.500" fill="url(#dots)" stroke="#bcbcbc" stroke-width="1"/><rect x="1566.5" y="610.5500000000001" width="14.500" height="14.500" fill="#fff" stroke="none"/><path d="M1566.5 610.5500000000001l7.250 7.250l7.250 -7.250z" fill="#e61cc8" /><path d="M1566.5 610.5500000000001l7.250 7.250l-7.250 7.250z" fill="#19d3f0"/><path d="M1581.0 610.5500000000001l-7.250 7.250l7.250 7.250z" fill="#f5ec1e"/><path d="M1566.5 625.0500000000001l7.250 -7.250l7.250 7.250z" fill="#000"/><rect x="1566.5" y="610.5500000000001" width="14.500" height="14.500" fill="none" stroke="#e8e8e8" stroke-width="1"/></g>
<g stroke="none"><rect x="1546.500" y="638.0" width="14.500" height="14.500" fill="url(#dots)" stroke="#bcbcbc" stroke-width="1"/><rect x="1566.5" y="638.0" width="14.500" height="14.500" fill="#fff" stroke="none"/><path d="M1566.5 638.0l7.250 7.250l7.250 -7.250z" fill="#e61cc8" /><path d="M1566.5 638.0l7.250 7.250l-7.250 7.250z" fill="#19d3f0"/><path d="M1581.0 638.0l-7.250 7.250l7.250 7.250z" fill="#f5ec1e"/><path d="M1566.5 652.5l7.250 -7.250l7.250 7.250z" fill="#000"/><rect x="1566.5" y="638.0" width="14.500" height="14.500" fill="none" stroke="#e8e8e8" stroke-width="1"/></g>
<g stroke="none"><rect x="1546.500" y="665.45" width="14.500" height="14.500" fill="url(#dots)" stroke="#bcbcbc" stroke-width="1"/><rect x="1566.5" y="665.45" width="14.500" height="14.500" fill="#fff" stroke="none"/><path d="M1566.5 665.45l7.250 7.250l7.250 -7.250z" fill="#e61cc8" /><path d="M1566.5 665.45l7.250 7.250l-7.250 7.250z" fill="#19d3f0"/><path d="M1581.0 665.45l-7.250 7.250l7.250 7.250z" fill="#f5ec1e"/><path d="M1566.5 679.95l7.250 -7.250l7.250 7.250z" fill="#000"/><rect x="1566.5" y="665.45" width="14.500" height="14.500" fill="none" stroke="#e8e8e8" stroke-width="1"/></g>
<g stroke="none"><rect x="1546.500" y="692.9000000000001" width="14.500" height="14.500" fill="url(#dots)" stroke="#bcbcbc" stroke-width="1"/><rect x="1566.5" y="692.9000000000001" width="14.500" height="14.500" fill="#fff" stroke="none"/><path d="M1566.5 692.9000000000001l7.250 7.250l7.250 -7.250z" fill="#e61cc8" /><path d="M1566.5 692.9000000000001l7.250 7.250l-7.250 7.250z" fill="#19d3f0"/><path d="M1581.0 692.9000000000001l-7.250 7.250l7.250 7.250z" fill="#f5ec1e"/><path d="M1566.5 707.4000000000001l7.250 -7.250l7.250 7.250z" fill="#000"/><rect x="1566.5" y="692.9000000000001" width="14.500" height="14.500" fill="none" stroke="#e8e8e8" stroke-width="1"/></g>
<g stroke="none"><rect x="1546.500" y="720.35" width="14.500" height="14.500" fill="url(#dots)" stroke="#bcbcbc" stroke-width="1"/><rect x="1566.5" y="720.35" width="14.500" height="14.500" fill="#fff" stroke="none"/><path d="M1566.5 720.35l7.250 7.250l7.250 -7.250z" fill="#e61cc8" /><path d="M1566.5 720.35l7.250 7.250l-7.250 7.250z" fill="#19d3f0"/><path d="M1581.0 720.35l-7.250 7.250l7.250 7.250z" fill="#f5ec1e"/><path d="M1566.5 734.85l7.250 -7.250l7.250 7.250z" fill="#000"/><rect x="1566.5" y="720.35" width="14.500" height="14.500" fill="none" stroke="#e8e8e8" stroke-width="1"/></g>
<g stroke="none"><rect x="1546.500" y="747.8000000000001" width="14.500" height="14.500" fill="url(#dots)" stroke="#bcbcbc" stroke-width="1"/><rect x="1566.5" y="747.8000000000001" width="14.500" height="14.500" fill="#fff" stroke="none"/><path d="M1566.5 747.8000000000001l7.250 7.250l7.250 -7.250z" fill="#e61cc8" /><path d="M1566.5 747.8000000000001l7.250 7.250l-7.250 7.250z" fill="#19d3f0"/><path d="M1581.0 747.8000000000001l-7.250 7.250l7.250 7.250z" fill="#f5ec1e"/><path d="M1566.5 762.3000000000001l7.250 -7.250l7.250 7.250z" fill="#000"/><rect x="1566.5" y="747.8000000000001" width="14.500" height="14.500" fill="none" stroke="#e8e8e8" stroke-width="1"/></g>
<g stroke="none"><rect x="1546.500" y="775.25" width="14.500" height="14.500" fill="url(#dots)" stroke="#bcbcbc" stroke-width="1"/><rect x="1566.5" y="775.25" width="14.500" height="14.500" fill="#fff" stroke="none"/><path d="M1566.5 775.25l7.250 7.250l7.250 -7.250z" fill="#e61cc8" /><path d="M1566.5 775.25l7.250 7.250l-7.250 7.250z" fill="#19d3f0"/><path d="M1581.0 775.25l-7.250 7.250l7.250 7.250z" fill="#f5ec1e"/><path d="M1566.5 789.75l7.250 -7.250l7.250 7.250z" fill="#000"/><rect x="1566.5" y="775.25" width="14.500" height="14.500" fill="none" stroke="#e8e8e8" stroke-width="1"/></g>
<g stroke="none" fill="#cfcfcf"><path d="M1266 847a4 4 0 0 1 -0.500 -7.800a5 5 0 0 1 9.500 -1.500a4.700 4.700 0 0 1 1 9.300z"/><path d="M1257 842h6v-2.500l4 3.500l-4 3.500v-2.500h-6z" stroke="#535353" stroke-width="0.800"/></g>
<g stroke="none" fill="#cfcfcf"><rect x="1451" y="834" width="13.500" height="12.500"/></g><g fill="#484848" stroke="none"><rect x="1452.7" y="835.6" width="2.400" height="2.200"/><rect x="1456.7" y="835.6" width="2.400" height="2.200"/><rect x="1460.7" y="835.6" width="2.400" height="2.200"/><rect x="1452.7" y="839.4" width="2.400" height="2.200"/><rect x="1456.7" y="839.4" width="2.400" height="2.200"/><rect x="1460.7" y="839.4" width="2.400" height="2.200"/><rect x="1452.7" y="843.2" width="2.400" height="2.200"/><rect x="1456.7" y="843.2" width="2.400" height="2.200"/><rect x="1460.7" y="843.2" width="2.400" height="2.200"/></g><path d="M1466.500 844.500h4l-2 2.500z" fill="#cfcfcf" stroke="none"/>
<path d="M1486.500 834.500h5.500l1.500 2h10v10h-17z" fill="#cfcfcf" stroke="none"/><path d="M1486.500 837.300h17" stroke="#535353" stroke-width="0.800"/>
<path d="M1522.500 834h13.500v12.500h-8.500l-5 -5z" fill="#d8d8d8" stroke="none"/><path d="M1522.500 841.500h5v5" stroke="#535353" stroke-width="1.200"/>
<g fill="#dcdcdc" stroke="none" opacity="0.930"><ellipse cx="1358.300" cy="705.500" rx="9.700" ry="13.800"/><ellipse cx="1383.500" cy="709.500" rx="10.500" ry="12.200"/><ellipse cx="1338" cy="724" rx="9.500" ry="12"/><ellipse cx="1399.700" cy="726.500" rx="9.500" ry="9.500"/><path d="M1356 737.500c0 -4 6 -6.500 13 -6.500s13 2.500 13 6.500zM1313.500 737.500v-3q0 -1.500 1.500 -1.500h22q4 0 4 4.500z"/><path d="M1421 733.500h9M1434 733.500h21M1462 733.500h14" stroke="#dcdcdc" stroke-width="1.400" opacity="0.800"/></g><rect x="1311" y="737.500" width="194" height="8.500" fill="#464646" opacity="0.900" stroke="none"/><rect x="1311" y="765.500" width="196" height="8.500" fill="#464646" opacity="0.900" stroke="none"/><path d="M1311 746.500h190M1311 773.800h196" stroke="#f6f6f6" stroke-width="1.500"/><g fill="#e2e2e2" stroke="none"><path d="M1314 761.500l4 -9.500h12l5 9.500zM1338 761.500l5 -9h10l6 9zM1362 761.500l3 -9.500h14l5 9.500zM1388 761.500l4 -9h12l5 9z" opacity="0.400"/><rect x="1436" y="751.500" width="36" height="9" opacity="0.500"/><rect x="1465" y="748" width="11" height="6" opacity="0.900"/><rect x="1314" y="775" width="162" height="3.500" opacity="0.450"/></g>
</svg>
<div class="t" style="left:25px;top:574px;font-size:63px;font-weight:bold;color:#dedede;opacity:0.940;transform:scaleX(1.120);transform-origin:0 0">a</div>
</div>
</body>
</html>
